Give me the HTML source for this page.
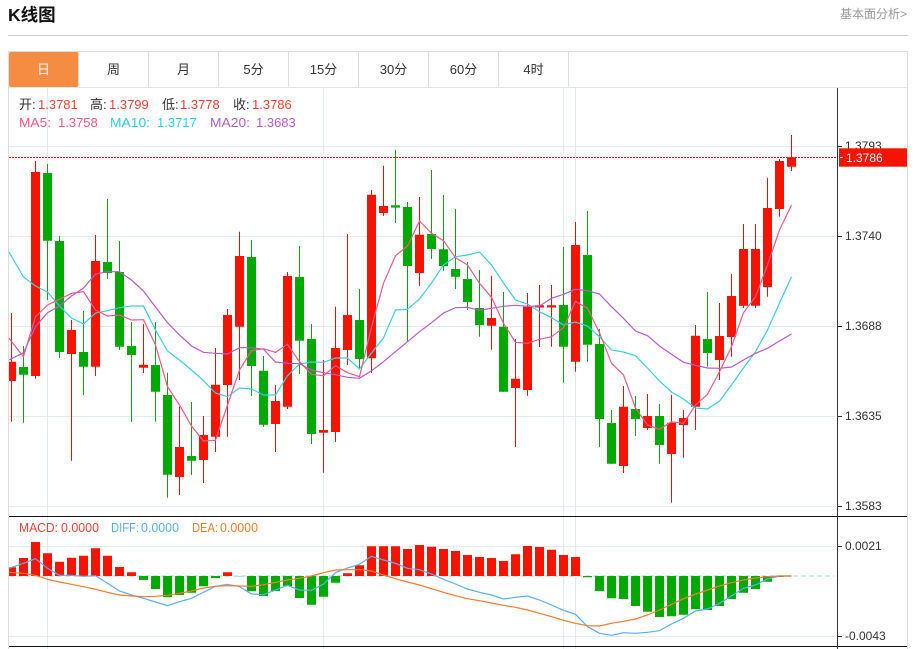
<!DOCTYPE html>
<html lang="zh"><head><meta charset="utf-8"><title>K线图</title>
<style>
html,body{margin:0;padding:0;background:#fff;width:915px;height:649px;overflow:hidden}
body{position:relative;font-family:"Liberation Sans","Noto Sans CJK SC",sans-serif}
h1{position:absolute;left:8px;top:4px;margin:0;font-size:17.5px;line-height:22px;font-weight:bold;color:#111}
.more{position:absolute;left:840px;top:6px;font-size:12px;line-height:16px;color:#999;white-space:nowrap}
.hr{position:absolute;left:8px;top:35px;width:900px;height:1px;background:#ccc}
.box{position:absolute;left:8px;top:51px;width:898px;height:600px;border:1px solid #ddd;border-width:1px 1px 0 1px;border-bottom:0}
.tabs{position:absolute;left:9px;top:52px;width:898px;height:35px;border-bottom:1px solid #e3e3e3;display:flex}
.tabs div{width:69px;height:35px;line-height:35px;text-align:center;font-size:13px;color:#333;border-right:1px solid #ddd;box-sizing:content-box}
.tabs div.on{background:#f48c42;color:#fff;border-radius:2px}
svg{position:absolute;left:0;top:0}
svg text{font-family:"Liberation Sans","Noto Sans CJK SC",sans-serif}
</style></head><body>
<h1>K线图</h1>
<div class="more">基本面分析&gt;</div>
<div class="hr"></div>
<div class="box"></div>
<div class="tabs"><div class="on">日</div><div>周</div><div>月</div><div>5分</div><div>15分</div><div>30分</div><div>60分</div><div>4时</div></div>
<svg width="915" height="649" viewBox="0 0 915 649">
<path d="M9 146.5H836M9 236.5H836M9 326.5H836M9 416.5H836M9 506.5H836M9 546.5H836M9 636.5H836M47.5 88V649M323.5 88V649M563.5 88V649M575.5 88V649" stroke="#e2ebf2" fill="none"/>
<path d="M9 576H834" stroke="#bde0ee" stroke-width="1.5" stroke-dasharray="5 3" fill="none"/>
<path d="M9 157.5H836" stroke="#f01010" stroke-dasharray="2 1" fill="none"/>

<path fill="none" stroke="#e01408" d="M11.5 313V421.7M35.5 161V378.7M71.5 320V460.7M95.5 235V376M143.5 324V373M179.5 406.7V495M203.5 416V483M215.5 348V452M227.5 309V436.7M239.5 231.7V380M275.5 385V452M287.5 272V409M323.5 360V472.7M335.5 306.7V442M347.5 234V365M371.5 190V373M383.5 165.7V216M419.5 197V286M491.5 275.7V349.7M515.5 339V447M527.5 293V395.7M539.5 285V347M551.5 285V346.7M575.5 222V371.7M623.5 386V473M647.5 394V430M671.5 395V502.7M683.5 410V457.7M695.5 325V430M719.5 303V380M731.5 274V356.7M743.5 224V308M755.5 224V308M767.5 177.7V296.7M779.5 159V216.7M791.5 135V171"/>
<path fill="none" stroke="#109f10" d="M23.5 346V422.7M47.5 164V300M59.5 236V358M83.5 311V395M107.5 199V278.7M119.5 241V350M131.5 322V422M155.5 322V421.7M167.5 372.7V497.7M191.5 402V475M251.5 240V396M263.5 356V426.7M299.5 246V374M311.5 324V444M359.5 289V368M395.5 149.7V223M407.5 202V340.7M431.5 170V259M443.5 195V270.7M455.5 209V289M467.5 262V310M479.5 270V336.7M503.5 292V392M563.5 247V382.7M587.5 211V361.7M599.5 329V447M611.5 410V464M635.5 396V436M659.5 404V463.7M707.5 292V366.7"/>
<path fill="#f51400" d="M9 361.7H16V381H9zM31 172h9V376h-9zM67 330h9V354h-9zM91 261h9V366.7h-9zM139 364.7h9V367.7h-9zM175 447h9V477h-9zM199 435h9V460h-9zM211 384.7h9V436.7h-9zM223 315h9V385h-9zM235 256h9V326.7h-9zM271 401h9V424h-9zM283 276h9V406.7h-9zM319 430h9V432.7h-9zM331 348h9V432h-9zM343 315h9V350h-9zM367 194.7h9V358.3h-9zM379 206h9V213h-9zM415 234.7h9V273h-9zM487 318h9V325.7h-9zM511 378.7h9V388h-9zM523 306.7h9V390h-9zM535 305.3h9V307.5h-9zM547 305.3h9V307.5h-9zM571 245h9V361.7h-9zM619 406.7h9V466h-9zM643 416h9V428h-9zM667 422.7h9V454h-9zM679 418h9V425h-9zM691 335.7h9V406.7h-9zM715 336h9V360h-9zM727 296h9V337h-9zM739 249h9V305.7h-9zM751 249h9V305.7h-9zM763 208h9V287h-9zM775 161h9V209h-9zM787 157.3h9V166.7h-9z"/>
<path fill="#00aa00" d="M19 367h9V374.7h-9zM43 173h9V240.7h-9zM55 241h9V352h-9zM79 352h9V366.7h-9zM103 262h9V273h-9zM115 272h9V346.7h-9zM127 346h9V355h-9zM151 365h9V391.7h-9zM163 395h9V474.7h-9zM187 456h9V460.7h-9zM247 257h9V366h-9zM259 370.7h9V424.7h-9zM295 277h9V340.7h-9zM307 339h9V434h-9zM355 320h9V359h-9zM391 205.3h9V207.6h-9zM403 207h9V266h-9zM427 234h9V249h-9zM439 249.3h9V266h-9zM451 269h9V276.7h-9zM463 279h9V302h-9zM475 308h9V325h-9zM499 326.7h9V391.7h-9zM559 305h9V346.7h-9zM583 255h9V344.7h-9zM595 344h9V419h-9zM607 423h9V463.7h-9zM631 409h9V419h-9zM655 416h9V445h-9zM703 339h9V353h-9z"/>

<polyline fill="none" stroke="#3ccfe2" stroke-width="1.2" points="9,252 23.5,277 35.5,286 47.5,292 59.5,306 71.5,318 83.5,324 95.5,313 107.5,310.7 119.5,307.7 131.5,306 143.5,306 155.5,330 167.5,351 179.5,360 191.5,370 203.5,380.7 215.5,393 227.5,396.7 239.5,388 251.5,389 263.5,395 275.5,395 287.5,375.7 299.5,364 311.5,362 323.5,362.3 335.5,358 347.5,358 359.5,369 371.5,353 383.5,338 395.5,310 407.5,309.3 419.5,299 431.5,283 443.5,265 455.5,256.7 467.5,255 479.5,252 491.5,265 503.5,283 515.5,300 527.5,304 539.5,311.7 551.5,317.7 563.5,325 575.5,322 587.5,326 599.5,336.7 611.5,350 623.5,352 635.5,355.7 647.5,368 659.5,381 671.5,392 683.5,399 695.5,408 707.5,409 719.5,401 731.5,385 743.5,368 755.5,351.7 767.5,330 779.5,303 791.5,276.7"/>
<polyline fill="none" stroke="#b55ccd" stroke-width="1.2" points="9,360 23.5,352.7 35.5,326.7 47.5,312.7 59.5,306 71.5,296 83.5,288 95.5,274 107.5,271.7 119.5,271.7 131.5,280 143.5,291 155.5,307 167.5,322.7 179.5,335 191.5,346 203.5,352.3 215.5,353.3 227.5,354 239.5,347.7 251.5,347.7 263.5,349.3 275.5,362 287.5,363.3 299.5,363.7 311.5,370 323.5,372.7 335.5,374.7 347.5,377.3 359.5,378.3 371.5,370.7 383.5,361.7 395.5,351.7 407.5,341.7 419.5,331.7 431.5,322.7 443.5,313 455.5,307.7 467.5,307.3 479.5,310.3 491.5,308.3 503.5,306.3 515.5,305.3 527.5,306.3 539.5,306 551.5,298.3 563.5,294.3 575.5,289.3 587.5,290.7 599.5,294 611.5,306.7 623.5,318.3 635.5,331 647.5,335.7 659.5,346 671.5,354.3 683.5,362.3 695.5,365.3 707.5,368 719.5,368.3 731.5,367 743.5,360 755.5,353.3 767.5,348.3 779.5,341 791.5,334"/>
<polyline fill="none" stroke="#f2588c" stroke-width="1.2" points="9,338.3 23.5,356.7 35.5,316.7 47.5,305 59.5,299.3 71.5,293.3 83.5,291.7 95.5,310 107.5,316 119.5,315 131.5,320 143.5,319.7 155.5,345 167.5,386.7 179.5,405 191.5,426 203.5,441 215.5,440.3 227.5,405 239.5,370 251.5,350.7 263.5,348.7 275.5,352.3 287.5,344.3 299.5,361.7 311.5,374.3 323.5,375.7 335.5,365.7 347.5,372.7 359.5,376.7 371.5,327 383.5,283.3 395.5,255.7 407.5,246 419.5,221 431.5,233.3 443.5,240.7 455.5,257.7 467.5,265 479.5,283.3 491.5,297.3 503.5,323.3 515.5,342.3 527.5,343.3 539.5,339.3 551.5,336.7 563.5,327.7 575.5,301.3 587.5,308.3 599.5,332.7 611.5,363.3 623.5,375 635.5,408 647.5,425 659.5,429.3 671.5,421.7 683.5,423.3 695.5,405 707.5,394.3 719.5,371.7 731.5,346.7 743.5,312.7 755.5,296.7 767.5,265 779.5,230 791.5,205"/>

<path fill="#f51400" d="M9 567.3H16V576H9zM19 558h9V576h-9zM31 542h9V576h-9zM43 553.3h9V576h-9zM55 561.7h9V576h-9zM67 557.7h9V576h-9zM79 555.7h9V576h-9zM91 548.3h9V576h-9zM103 555.7h9V576h-9zM115 567h9V576h-9zM127 572.3h9V576h-9zM223 572.3h9V576h-9zM343 573.3h9V576h-9zM355 565.3h9V576h-9zM367 546.3h9V576h-9zM379 546.3h9V576h-9zM391 546.3h9V576h-9zM403 549h9V576h-9zM415 545h9V576h-9zM427 546.7h9V576h-9zM439 549h9V576h-9zM451 551h9V576h-9zM463 555h9V576h-9zM475 557h9V576h-9zM487 558h9V576h-9zM499 561h9V576h-9zM511 554.3h9V576h-9zM523 546h9V576h-9zM535 547h9V576h-9zM547 549.7h9V576h-9zM559 555h9V576h-9zM571 557h9V576h-9z"/>
<path fill="#00aa00" d="M139 576h9V580h-9zM151 576h9V589h-9zM163 576h9V597.3h-9zM175 576h9V595h-9zM187 576h9V592.7h-9zM199 576h9V586.3h-9zM211 576h9V578h-9zM247 576h9V591.3h-9zM259 576h9V596h-9zM271 576h9V591h-9zM283 576h9V586h-9zM295 576h9V598h-9zM307 576h9V604.7h-9zM319 576h9V596.7h-9zM331 576h9V582.7h-9zM583 576h9V577.3h-9zM595 576h9V591h-9zM607 576h9V598.3h-9zM619 576h9V599h-9zM631 576h9V606h-9zM643 576h9V611.7h-9zM655 576h9V617h-9zM667 576h9V616.3h-9zM679 576h9V614.7h-9zM691 576h9V609.3h-9zM703 576h9V610h-9zM715 576h9V606h-9zM727 576h9V599h-9zM739 576h9V592.7h-9zM751 576h9V589h-9zM763 576h9V581.7h-9zM775 576h9V577h-9z"/>
<path fill="#bfe6cf" d="M235 576h9V577h-9z"/>
<polyline fill="none" stroke="#5ab0f2" stroke-width="1.2" points="9,568.3 23.5,563.3 35.5,558.7 47.5,568.3 59.5,575.3 71.5,575.3 83.5,576.3 95.5,575.7 107.5,583.3 119.5,591 131.5,595 143.5,598.3 155.5,602 167.5,605.7 179.5,601.7 191.5,598.3 203.5,592.3 215.5,586.3 227.5,584.3 239.5,586.7 251.5,594 263.5,594.7 275.5,590 287.5,585.3 299.5,590 311.5,590.3 323.5,584 335.5,572.7 347.5,568 359.5,564.3 371.5,556.3 383.5,560 395.5,563.3 407.5,568.3 419.5,569.7 431.5,574 443.5,579.3 455.5,584 467.5,589 479.5,592.3 491.5,595 503.5,599 515.5,597.3 527.5,596 539.5,600 551.5,605 563.5,610.3 575.5,614.3 587.5,626.7 599.5,633.3 611.5,635.3 623.5,632.7 635.5,633.3 647.5,632.3 659.5,630.7 671.5,624 683.5,618.3 695.5,611 707.5,609 719.5,603.3 731.5,596 743.5,588.3 755.5,585 767.5,579 779.5,576 791.5,576"/>
<polyline fill="none" stroke="#f97a2a" stroke-width="1.2" points="9,572.3 23.5,573.3 35.5,575.3 47.5,579.3 59.5,582 71.5,584.3 83.5,586.7 95.5,589.3 107.5,592.3 119.5,595 131.5,596 143.5,596.7 155.5,596.3 167.5,595.3 179.5,593.3 191.5,591 203.5,588 215.5,586.3 227.5,585.7 239.5,586 251.5,586.3 263.5,584.7 275.5,582.3 287.5,580 299.5,578.3 311.5,576 323.5,572.7 335.5,570 347.5,569.7 359.5,569.7 371.5,571 383.5,575 395.5,578.7 407.5,582 419.5,585 431.5,588.7 443.5,592.3 455.5,595.7 467.5,598.7 479.5,600.7 491.5,603 503.5,605.3 515.5,607.3 527.5,610 539.5,613.3 551.5,616.7 563.5,620.3 575.5,623.3 587.5,625.7 599.5,626 611.5,623.3 623.5,621.3 635.5,619 647.5,615 659.5,610 671.5,604.3 683.5,598.7 695.5,594.3 707.5,590 719.5,586 731.5,582.7 743.5,580 755.5,578 767.5,576.7 779.5,576 791.5,576"/>

<path d="M9 516.5H907M9 646.5H907" stroke="#111" fill="none"/>
<path d="M837.5 88V649" stroke="#333" stroke-width="1" fill="none"/>
<path d="M838 146.5h4M838 236.5h4M838 326.5h4M838 416.5h4M838 506.5h4M838 546.5h4M838 636.5h4" stroke="#333" fill="none"/>

<g font-size="12" fill="#333">
<text x="845" y="150">1.3793</text>
<text x="845" y="240">1.3740</text>
<text x="845" y="330">1.3688</text>
<text x="845" y="420">1.3635</text>
<text x="845" y="510">1.3583</text>
<text x="845" y="550">0.0021</text>
<text x="845" y="640">-0.0043</text>
</g>
<rect x="839" y="148.3" width="68" height="18.4" fill="#f51400"/>
<path d="M840 157.5h3" stroke="#fff"/>
<text x="846" y="162" font-size="12" fill="#fff">1.3786</text>

<g font-size="13">
<text x="19" y="109" fill="#333">开:</text><text x="38" y="109" fill="#f44336">1.3781</text>
<text x="90" y="109" fill="#333">高:</text><text x="109" y="109" fill="#f44336">1.3799</text>
<text x="162" y="109" fill="#333">低:</text><text x="180" y="109" fill="#f44336">1.3778</text>
<text x="233" y="109" fill="#333">收:</text><text x="252" y="109" fill="#f44336">1.3786</text>
<text x="19" y="127" fill="#f2588c" textLength="32" lengthAdjust="spacingAndGlyphs">MA5:</text><text x="58" y="127" fill="#f2588c">1.3758</text>
<text x="110" y="127" fill="#2ccfe2" textLength="40" lengthAdjust="spacingAndGlyphs">MA10:</text><text x="157" y="127" fill="#2ccfe2">1.3717</text>
<text x="210" y="127" fill="#b55ccd" textLength="40" lengthAdjust="spacingAndGlyphs">MA20:</text><text x="256" y="127" fill="#b55ccd">1.3683</text>
<text x="19" y="532" fill="#f44336" textLength="39" lengthAdjust="spacingAndGlyphs">MACD:</text><text x="61" y="532" fill="#f44336" textLength="38" lengthAdjust="spacingAndGlyphs">0.0000</text>
<text x="111" y="532" fill="#5ab0f2" textLength="28" lengthAdjust="spacingAndGlyphs">DIFF:</text><text x="141" y="532" fill="#5ab0f2" textLength="38" lengthAdjust="spacingAndGlyphs">0.0000</text>
<text x="192" y="532" fill="#f97a2a" textLength="26" lengthAdjust="spacingAndGlyphs">DEA:</text><text x="220" y="532" fill="#f97a2a" textLength="38" lengthAdjust="spacingAndGlyphs">0.0000</text>
</g>
</svg>
</body></html>
